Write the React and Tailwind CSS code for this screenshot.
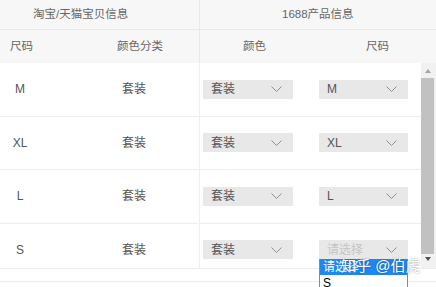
import React from "react";

const rows = [
  { size: "M", color: "套装", pick: "M" },
  { size: "XL", color: "套装", pick: "XL" },
  { size: "L", color: "套装", pick: "L" },
  { size: "S", color: "套装", pick: "" },
];

function Chevron() {
  return (
    <svg width="11" height="6" viewBox="0 0 11 6" fill="none">
      <polyline points="0.5,0.5 5.5,5.5 10.5,0.5" stroke="#8f8f8f" strokeWidth="1" />
    </svg>
  );
}

function FakeSelect({ value, width, placeholder = "请选择" }) {
  return (
    <div
      className={`h-[19px] bg-[#e8e8e8] flex items-center justify-between pl-[8px] pr-[11px] ${width}`}
    >
      <span className={value ? "text-[#555]" : "text-[#c4c4c4]"}>{value || placeholder}</span>
      <Chevron />
    </div>
  );
}

export default function App() {
  return (
    <div
      className="relative w-[436px] h-[287px] overflow-hidden bg-white text-[11.5px] text-[#666]"
      style={{ fontFamily: '"Liberation Sans", "Noto Sans CJK SC", sans-serif' }}
    >
      {/* Header */}
      <div className="bg-[#f7f7f7]">
        <div className="flex h-[30px] border-b border-[#e9e9e9]">
          <div className="w-[200px] border-r border-[#e9e9e9] flex items-center pl-[33px]">
            淘宝/天猫宝贝信息
          </div>
          <div className="flex-1 flex items-center pl-[82px]">1688产品信息</div>
        </div>
        <div className="flex h-[33px]">
          <div className="w-[117px] flex items-center pl-[10px]">尺码</div>
          <div className="w-[83px] border-r border-[#e9e9e9] flex items-center">颜色分类</div>
          <div className="w-[166px] flex items-center pl-[43px]">颜色</div>
          <div className="flex items-center">尺码</div>
        </div>
      </div>

      {/* Body */}
      <div className="flex h-[206px] border-b border-[#ececec] overflow-hidden">
        <div className="flex-1 flex flex-col">
          {rows.map((r, i) => (
            <div key={i} className="flex h-[53.5px] shrink-0 border-b border-[#eeeeee]">
              <div className="w-[40px] flex items-center justify-center text-[#555] text-[12px]">
                {r.size}
              </div>
              <div className="w-[160px] border-r border-[#eeeeee] flex items-center pl-[82px] text-[#555] text-[12px]">
                {r.color}
              </div>
              <div className="flex items-center pl-[3px] gap-[26px] text-[12px]">
                <FakeSelect value="套装" width="w-[90px]" />
                <FakeSelect value={r.pick} width="w-[89px]" />
              </div>
            </div>
          ))}
        </div>
        {/* scrollbar */}
        <div className="w-[15px] bg-[#f1f1f1] flex flex-col items-stretch pb-[4px]">
          <div className="h-[15px] flex items-center justify-center pr-[2px]">
            <div className="w-0 h-0 border-l-[3px] border-r-[3px] border-b-[4px] border-l-transparent border-r-transparent border-b-[#a3a3a3]" />
          </div>
          <div className="flex-1 bg-[#c1c1c1] mr-[2px]" />
          <div className="h-[10px] flex items-center justify-center pr-[2px]">
            <div className="w-0 h-0 border-l-[3px] border-r-[3px] border-t-[4px] border-l-transparent border-r-transparent border-t-[#505050]" />
          </div>
        </div>
      </div>
      <div className="h-[13px] border-b border-[#ececec]" />

      {/* Open dropdown list */}
      <div className="absolute left-[319px] top-[259px] w-[89px] border-x border-[#8a8a8a] bg-white text-[12px]">
        <div className="h-[16px] bg-[#1e87f0] text-white pl-[3px] leading-[16px]">请选择</div>
        <div className="h-[16px] text-black pl-[3px] leading-[16px]">S</div>
      </div>

      {/* Watermark */}
      <div
        className="absolute left-[341px] top-[257px] text-[15px] text-white leading-[18px] whitespace-nowrap"
        style={{ textShadow: "0 0 2px rgba(0,0,0,0.45)" }}
      >
        知乎 @伯虎
      </div>
    </div>
  );
}
